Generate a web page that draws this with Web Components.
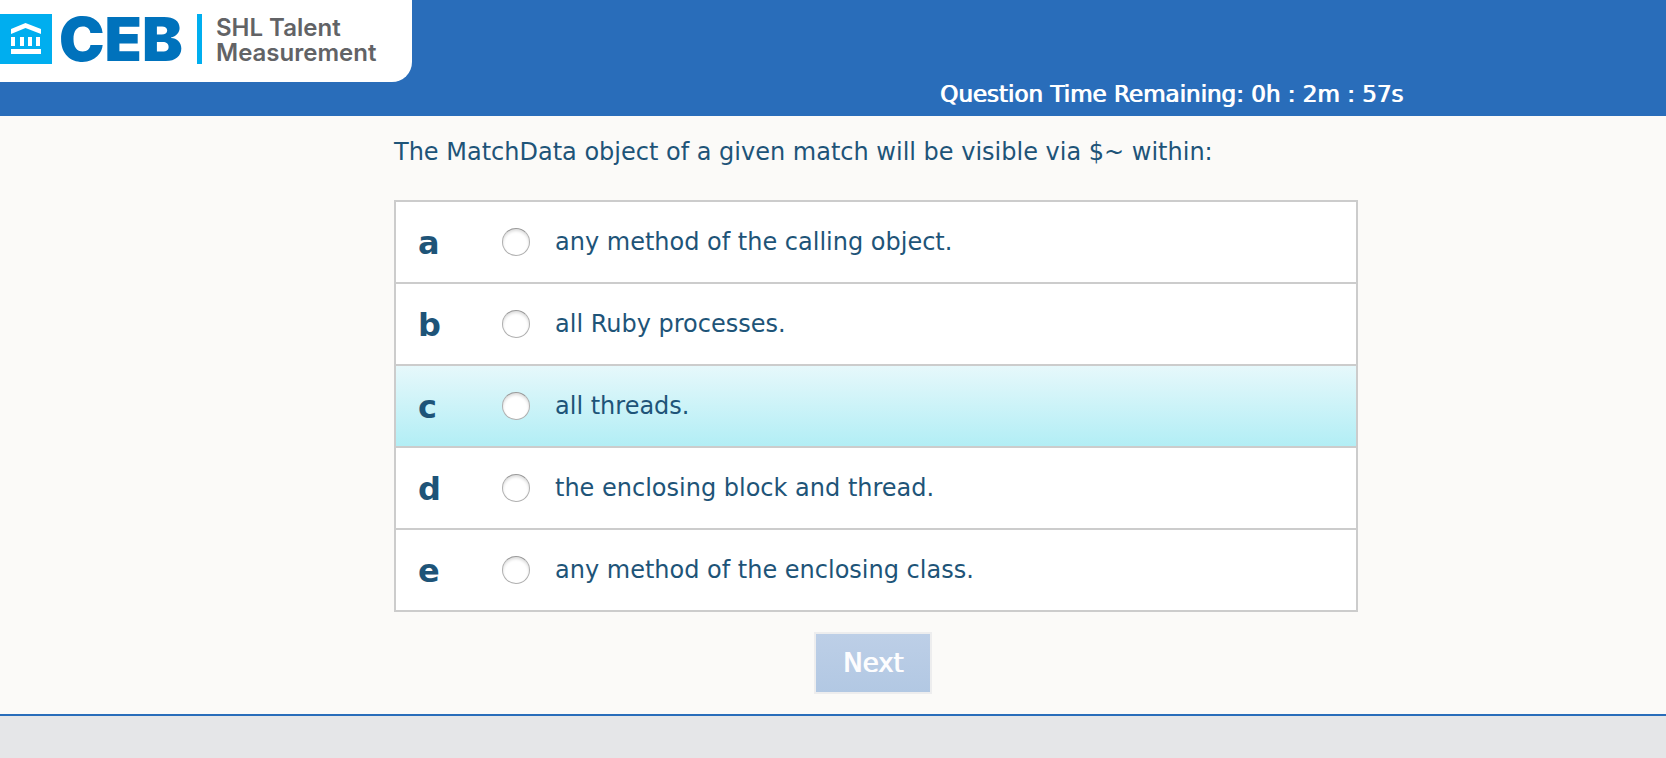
<!DOCTYPE html>
<html lang="en">
<head>
<meta charset="utf-8">
<meta name="viewport" content="width=device-width, initial-scale=1">
<title>SHL Talent Measurement</title>
<style>
  html, body { margin: 0; min-height: 100%; }
  body {
    background: #e5e6e8;
    color: #1e5478;
    font-family: Verdana, "DejaVu Sans", sans-serif;
    font-size: 24px;
  }
</style>
</head>
<body>
<test-page>
  <test-header slot="header">
    <brand-logo slot="logo"></brand-logo>
    <span slot="timer">Question Time Remaining: 0h : 2m : 57s</span>
  </test-header>
  <question-panel>
    <span slot="question">The MatchData object of a given match will be visible via $~ within:</span>
    <answer-list active="c">
      <data value="a">any method of the calling object.</data>
      <data value="b">all Ruby processes.</data>
      <data value="c">all threads.</data>
      <data value="d">the enclosing block and thread.</data>
      <data value="e">any method of the enclosing class.</data>
    </answer-list>
    <next-button slot="action">Next</next-button>
  </question-panel>
</test-page>

<script>
const define = (name, html) => customElements.define(name, class extends HTMLElement {
  constructor() {
    super();
    this.attachShadow({ mode: 'open' }).innerHTML = html;
  }
});

define('test-page', `
  <style>
    :host { display: block; background: #fbfaf8; border-bottom: 2px solid #296dba; }
  </style>
  <slot name="header"></slot>
  <main><slot></slot></main>`);

define('test-header', `
  <style>
    :host { display: grid; background: #296dba; color: #fff; height: 116px; }
    .logo { grid-area: 1 / 1; justify-self: start; align-self: start; }
    .bar {
      grid-area: 1 / 1; align-self: end; justify-self: center;
      box-sizing: border-box; width: 100%; max-width: 1140px;
      padding-bottom: 8px; text-align: right;
      font-size: 23px; line-height: 28px; text-shadow: 1px 0 currentColor;
    }
  </style>
  <div class="logo"><slot name="logo"></slot></div>
  <div class="bar" role="timer"><slot name="timer"></slot></div>`);

define('brand-logo', `
  <style>
    :host {
      display: flex; box-sizing: border-box; width: 412px; height: 82px;
      padding-top: 14px; background: #fff; border-bottom-right-radius: 20px;
    }
    svg { width: 52px; height: 50px; flex: none; }
    .name {
      width: 138px; padding-left: 7px; color: #0072bc;
      font: 900 61px/50px Inter, sans-serif;
    }
    .rule { width: 5px; height: 50px; background: #00aeef; }
    .unit {
      padding: 1px 0 0 14px; color: #626366;
      font: 600 24px/25px Inter, sans-serif;
    }
    .unit div { height: 25px; }
  </style>
  <svg viewBox="0 0 52 50" aria-hidden="true">
    <path fill="#00aeef" d="M0 0h52v50H0z"/>
    <path fill="#fff" d="M11 15 25.500 9 41 15v5L25.500 14 11 20z"/>
    <path fill="#fff" d="M11 23h4v9h-4zM20 23h4v9h-4zM28 23h4v9h-4zM36 23h4v9h-4zM11 35h30v5H11z"/>
  </svg>
  <div class="name">CEB</div>
  <div class="rule"></div>
  <div class="unit"><div>SHL Talent</div><div>Measurement</div></div>`);

define('question-panel', `
  <style>
    :host {
      display: block; box-sizing: border-box; max-width: 1140px; margin: 0 auto;
      padding: 20px 45px 20px 131px;
    }
    h1 { margin: 0 0 32px; font: inherit; line-height: 32px; }
    .action { display: flex; justify-content: center; margin-top: 20px; padding-right: 6px; }
  </style>
  <h1><slot name="question"></slot></h1>
  <slot></slot>
  <div class="action"><slot name="action"></slot></div>`);

customElements.define('answer-list', class extends HTMLElement {
  connectedCallback() {
    const root = this.attachShadow({ mode: 'open' });
    root.innerHTML = `
      <style>
        :host { display: block; }
        fieldset { margin: 0; padding: 0; min-width: 0; border: 2px solid #ccc; background: #fff; }
        label {
          display: grid; grid-template-columns: 84px 28px 1fr; align-items: center;
          min-height: 80px; padding-left: 22px;
        }
        label + label { border-top: 2px solid #ccc; }
        .active { background: linear-gradient(#e6f8fb, #b2eef5); }
        b { font-size: 32px; line-height: 40px; padding-top: 2px; }
        input {
          appearance: none; box-sizing: border-box; width: 28px; height: 28px; margin: 0;
          border: 1px solid #b0b0b0; border-top-color: #999; border-radius: 50%;
          background: #fff; box-shadow: inset 0 2px 3px #ddd;
        }
        input:checked { background: radial-gradient(#1e5478 30%, #fff 35%); }
        .text { padding-left: 25px; line-height: 32px; }
      </style>
      <fieldset aria-label="Answers"></fieldset>`;
    const set = root.querySelector('fieldset');
    for (const item of this.querySelectorAll('data')) {
      const row = document.createElement('label');
      row.innerHTML = '<b></b><input type="radio" name="answer"><span class="text"></span>';
      row.classList.toggle('active', item.value === this.getAttribute('active'));
      row.children[0].textContent = item.value;
      row.children[1].value = item.value;
      row.children[2].textContent = item.textContent;
      set.append(row);
    }
  }
});

define('next-button', `
  <style>
    :host { display: block; }
    button {
      display: block; box-sizing: border-box; width: 118px; height: 62px; padding: 0;
      border: 2px solid #ededee; background: linear-gradient(#bdcfe7, #b2c8e3);
      color: #fdfdfe; font: inherit; font-size: 26px; line-height: 32px; text-shadow: 1px 0 currentColor;
    }
  </style>
  <button type="button" disabled><slot></slot></button>`);
</script>
</body>
</html>
